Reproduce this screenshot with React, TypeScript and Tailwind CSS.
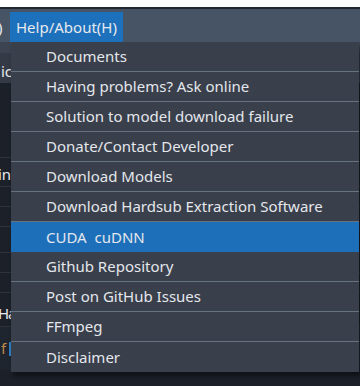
import React from "react"

const items = [
  "Documents",
  "Having problems? Ask online",
  "Solution to model download failure",
  "Donate/Contact Developer",
  "Download Models",
  "Download Hardsub Extraction Software",
  "CUDA  cuDNN",
  "Github Repository",
  "Post on GitHub Issues",
  "FFmpeg",
  "Disclaimer",
]

export default function App() {
  return (
    <div
      className="relative w-[360px] h-[386px] overflow-hidden bg-[#1b2029] text-[15px]"
      style={{ fontFamily: '"Noto Sans", "Open Sans", sans-serif' }}
    >
      <div className="h-[7px] bg-white" />
      <div className="h-[2px] bg-[#23282f]" />
      {/* menu bar */}
      <div className="flex h-[33px] items-end bg-[#475466] text-[#e6e9ee]">
        <span className="h-[30px] w-[10px] overflow-hidden leading-[30px] -indent-[2px]">)</span>
        <span className="h-[30px] bg-[#1d70bb] px-[6px] leading-[30px]">Help/About(H)</span>
      </div>
      {/* content behind the menu */}
      <div className="flex flex-col text-[#e6e9ee]">
        <div className="h-[11px] bg-[#3d4451]" />
        <div className="h-[30px] bg-[#343b47] overflow-hidden whitespace-nowrap leading-[36px] pl-[1px]">ic</div>
        <div className="h-[75px] border-b border-[#2c333d]" />
        <div className="h-[29px] border-b border-[#2c333d] leading-[32px] -ml-[2px] whitespace-nowrap">in</div>
        <div className="h-[20px] border-b border-[#2c333d]" />
        <div className="h-[20px] border-b border-[#2c333d]" />
        <div className="h-[26px] border-b border-[#2c333d]" />
        <div className="h-[20px] border-b border-[#2c333d]" />
        <div className="h-[20px] border-b border-[#2c333d]" />
        <div className="h-[34px] border-b border-[#2c333d] leading-[40px] -ml-[2px] tracking-[-1px] whitespace-nowrap">Ha</div>
        <div className="flex h-[43px] items-center gap-[3px] bg-[#1f252e] pl-[1px]">
          <span className="text-[#c4894a]">f</span>
          <span className="h-[14px] w-[2px] bg-[#2f7fc4]" />
        </div>
      </div>
      {/* dropdown */}
      <div className="absolute left-[11px] top-[42px] w-[348px] bg-[#393f4b] text-[#e4e7ec] shadow-[2px_4px_4px_rgba(0,0,0,0.45)]">
        {items.map((label, i) => (
          <div
            key={label}
            className={
              i === 6
                ? "flex h-[30px] items-center bg-[#1d6fb9] pl-[35px] whitespace-pre"
                : "flex h-[30px] items-center pl-[35px] whitespace-pre" +
                  (i < items.length - 1 ? " border-b border-[#66727f]" : "")
            }
          >
            {label}
          </div>
        ))}
      </div>
    </div>
  )
}
